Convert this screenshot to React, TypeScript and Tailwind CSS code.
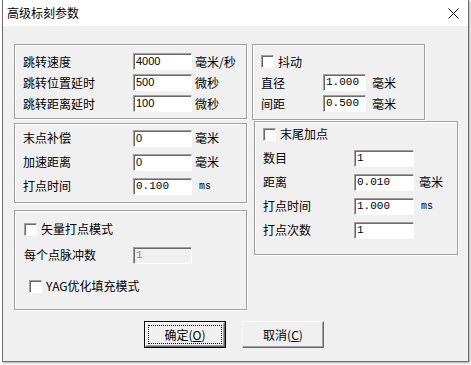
import React from 'react';

const cjk = 'font-["Noto_Sans_CJK_SC","Noto_Sans",sans-serif]';

function Group({ className, children }: { className: string; children: React.ReactNode }) {
  return (
    <div className={`border border-[#a0a0a0] shadow-[1px_1px_0_#fff,inset_1px_1px_0_#fff] ${className}`}>
      {children}
    </div>
  );
}

function Field({ value, width, mono, disabled }: { value: string; width: string; mono?: boolean; disabled?: boolean }) {
  return (
    <div
      className={`h-[17px] ${width} flex items-center pl-[2px] border border-t-[#a0a0a0] border-l-[#a0a0a0] border-r-white border-b-white shadow-[inset_1px_1px_0_#696969] ${
        disabled ? 'bg-[#f0f0f0] text-[#8a8a8a]' : 'bg-white text-black'
      } ${mono ? 'font-["Liberation_Mono",monospace] text-[11px]' : 'font-["Liberation_Sans",Arial,sans-serif] text-[11px]'} leading-none`}
    >
      {value}
    </div>
  );
}

function Check({ label, className = '' }: { label: string; className?: string }) {
  return (
    <div className={`flex items-center ${className}`}>
      <div className="w-[13px] h-[13px] bg-white border border-t-[#a0a0a0] border-l-[#a0a0a0] border-r-white border-b-white shadow-[inset_1px_1px_0_#696969]" />
      <span className="ml-[4px] text-[12px] leading-none">{label}</span>
    </div>
  );
}

function Row({ label, value, unit, h, labelW, fieldW, mono, unitMono, gap = 'ml-[4px]', disabled }: {
  label: string; value: string; unit?: string; h: string; labelW: string; fieldW: string;
  mono?: boolean; unitMono?: boolean; gap?: string; disabled?: boolean;
}) {
  return (
    <div className={`flex items-center ${h}`}>
      <span className={`${labelW} text-[12px] leading-none`}>{label}</span>
      <Field value={value} width={fieldW} mono={mono} disabled={disabled} />
      {unit && (
        <span className={`${gap} leading-none ${unitMono ? 'font-["Liberation_Mono",monospace] text-[10px] ml-[7px] mt-[2px]' : 'text-[12px]'}`}>
          {unit}
        </span>
      )}
    </div>
  );
}

function Button({ children, primary }: { children: React.ReactNode; primary?: boolean }) {
  return (
    <div className={`w-[82px] h-[27px] ${primary ? 'border border-black' : ''}`}>
      <div className="w-full h-full bg-[#f0f0f0] border border-t-white border-l-white border-r-[#696969] border-b-[#696969] shadow-[inset_-1px_-1px_0_#a0a0a0] flex items-center justify-center relative">
        {primary && <div className="absolute inset-[2px] border border-dotted border-black" />}
        <span className="text-[12px] leading-none">{children}</span>
      </div>
    </div>
  );
}

export default function App() {
  return (
    <div className={`w-[471px] h-[365px] bg-white overflow-hidden text-black ${cjk}`}>
      <div className="ml-[2px] w-[467px] h-[362px] border-l border-r border-b border-[#6d6d6d] shadow-[1px_1px_2px_rgba(0,0,0,0.35)] flex flex-col">
        <div className="h-[26px] bg-white flex items-center justify-between pl-[4px] pr-[6px]">
          <span className="text-[12px] leading-none">高级标刻参数</span>
          <svg width="11" height="11" viewBox="0 0 11 11" className="mr-[3px]">
            <path d="M0.5 0.5 L10.5 10.5 M10.5 0.5 L0.5 10.5" stroke="#000" strokeWidth="1" />
          </svg>
        </div>
        <div className="flex-1 bg-[#f0f0f0] flex flex-col">
          <div className="flex pt-[18px] pl-[11px]">
            <div className="w-[233px] flex flex-col">
              <Group className="h-[75px] pt-[6px] pl-[8px]">
                <Row label="跳转速度" value="4000" unit="毫米/秒" h="h-[21px]" labelW="w-[110px]" fieldW="w-[59px]" gap="ml-[3px]" />
                <Row label="跳转位置延时" value="500" unit="微秒" h="h-[21px]" labelW="w-[110px]" fieldW="w-[59px]" gap="ml-[3px]" />
                <Row label="跳转距离延时" value="100" unit="微秒" h="h-[21px]" labelW="w-[110px]" fieldW="w-[59px]" gap="ml-[3px]" />
              </Group>
              <Group className="mt-[4px] h-[80px] pt-[2px] pl-[8px]">
                <Row label="末点补偿" value="0" unit="毫米" h="h-[24px]" labelW="w-[110px]" fieldW="w-[59px]" gap="ml-[3px]" />
                <Row label="加速距离" value="0" unit="毫米" h="h-[24px]" labelW="w-[110px]" fieldW="w-[59px]" gap="ml-[3px]" />
                <Row label="打点时间" value="0.100" unit="ms" h="h-[24px]" labelW="w-[110px]" fieldW="w-[59px]" mono unitMono />
              </Group>
              <Group className="mt-[7px] h-[100px] pt-[5px] pl-[9px]">
                <Check label="矢量打点模式" className="h-[26px]" />
                <Row label="每个点脉冲数" value="1" h="h-[26px]" labelW="w-[109px]" fieldW="w-[59px]" disabled mono />
                <Check label="YAG优化填充模式" className="h-[26px] mt-[5px] ml-[5px]" />
              </Group>
            </div>
            <div className="ml-[5px] flex flex-col">
              <Group className="w-[173px] h-[76px] pt-[6px] pl-[8px]">
                <Check label="抖动" className="h-[21px]" />
                <Row label="直径" value="1.000" unit="毫米" h="h-[21px]" labelW="w-[62px]" fieldW="w-[43px]" mono gap="ml-[6px]" />
                <Row label="间距" value="0.500" unit="毫米" h="h-[21px]" labelW="w-[62px]" fieldW="w-[43px]" mono gap="ml-[6px]" />
              </Group>
              <Group className="ml-[2px] mt-[1px] w-[204px] h-[134px] pl-[8px]">
                <Check label="末尾加点" className="h-[24px]" />
                <Row label="数目" value="1" h="h-[24px]" labelW="w-[91px]" fieldW="w-[60px]" mono />
                <Row label="距离" value="0.010" unit="毫米" h="h-[24px]" labelW="w-[91px]" fieldW="w-[60px]" mono gap="ml-[5px]" />
                <Row label="打点时间" value="1.000" unit="ms" h="h-[24px]" labelW="w-[91px]" fieldW="w-[60px]" mono unitMono />
                <Row label="打点次数" value="1" h="h-[24px]" labelW="w-[91px]" fieldW="w-[60px]" mono />
              </Group>
            </div>
          </div>
          <div className="flex mt-[11px] pl-[141px] gap-[16px]">
            <Button primary>
              确定(<span className="underline">O</span>)
            </Button>
            <Button>
              取消(<span className="underline">C</span>)
            </Button>
          </div>
        </div>
      </div>
    </div>
  );
}
